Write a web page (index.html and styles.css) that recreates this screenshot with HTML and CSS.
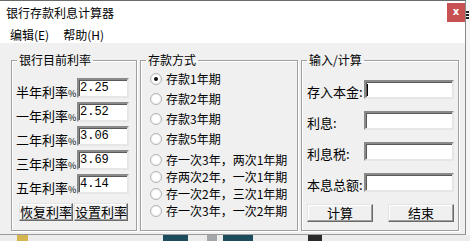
FILE: index.html
```html
<!DOCTYPE html>
<html lang="zh-CN">
<head>
    <meta charset="UTF-8">
    <title>银行存款利息计算器</title>
    <link rel="stylesheet" href="styles.css">
</head>
<body>
    <div class="desk">
        <div class="window">
            <div class="titlebar">
                <span class="title">银行存款利息计算器</span>
                <span class="close">x</span>
            </div>
            <div class="menubar">
                <span>编辑(E)</span>
                <span>帮助(H)</span>
            </div>

            <div class="client">
                <!-- 利率 -->
                <fieldset class="group rates">
                    <legend>银行目前利率</legend>
                    <div class="rates-body">
                        <div class="rate-row"><span class="label">半年利率<small>%</small></span><div class="field">2.25</div></div>
                        <div class="rate-row"><span class="label">一年利率<small>%</small></span><div class="field">2.52</div></div>
                        <div class="rate-row"><span class="label">二年利率<small>%</small></span><div class="field">3.06</div></div>
                        <div class="rate-row"><span class="label">三年利率<small>%</small></span><div class="field">3.69</div></div>
                        <div class="rate-row"><span class="label">五年利率<small>%</small></span><div class="field">4.14</div></div>
                        <div class="btn-row">
                            <button class="btn">恢复利率</button>
                            <button class="btn">设置利率</button>
                        </div>
                    </div>
                </fieldset>

                <!-- 存款方式 -->
                <fieldset class="group modes">
                    <legend>存款方式</legend>
                    <div class="modes-body">
                        <div class="radio-row"><span class="radio checked"></span>存款1年期</div>
                        <div class="radio-row"><span class="radio"></span>存款2年期</div>
                        <div class="radio-row"><span class="radio"></span>存款3年期</div>
                        <div class="radio-row"><span class="radio"></span>存款5年期</div>
                        <div class="radio-row tight first-tight"><span class="radio"></span>存一次3年，两次1年期</div>
                        <div class="radio-row tight"><span class="radio"></span>存两次2年，一次1年期</div>
                        <div class="radio-row tight"><span class="radio"></span>存一次2年，三次1年期</div>
                        <div class="radio-row tight"><span class="radio"></span>存一次3年，一次2年期</div>
                    </div>
                </fieldset>

                <!-- 输入/计算 -->
                <fieldset class="group calc">
                    <legend>输入/计算</legend>
                    <div class="calc-body">
                        <div class="calc-row"><span class="label">存入本金:</span><div class="field wide"><span class="caret"></span></div></div>
                        <div class="calc-row"><span class="label">利息:</span><div class="field wide"></div></div>
                        <div class="calc-row"><span class="label">利息税:</span><div class="field wide"></div></div>
                        <div class="calc-row"><span class="label">本息总额:</span><div class="field wide"></div></div>
                        <div class="calc-btns">
                            <button class="btn big">计算</button>
                            <button class="btn big">结束</button>
                        </div>
                    </div>
                </fieldset>
            </div>
        </div>
        <div class="side">
            <span class="mark"></span>
        </div>
    </div>
    <div class="below">
        <span class="blk yellow"></span>
        <span class="blk teal one"></span>
        <span class="blk grey"></span>
        <span class="blk teal two"></span>
        <span class="blk dark"></span>
    </div>
</body>
</html>
```

FILE: styles.css
```css
body {
    margin: 0;
    padding: 0;
    background: #ececec;
    font-family: "Noto Sans CJK SC", "Noto Sans", sans-serif;
    font-size: 12px;
    color: #000;
}

.desk {
    display: flex;
}

.window {
    box-sizing: border-box;
    width: 466px;
    height: 235px;
    border-top: 1px solid #6b6b6b;
    border-right: 1px solid #8a8a8a;
    border-bottom: 1px solid #9a9a9a;
    background: #f0f0f0;
    display: flex;
    flex-direction: column;
}

.titlebar {
    height: 21px;
    background: #fff;
    display: flex;
    justify-content: space-between;
}

.title {
    padding: 3px 0 0 6px;
    line-height: 18px;
}

.close {
    width: 18px;
    height: 19px;
    margin-top: 2px;
    background: #c75050;
    color: #fff;
    font: bold 10px "DejaVu Sans", sans-serif;
    line-height: 17px;
    text-align: center;
}

.menubar {
    height: 21px;
    box-sizing: border-box;
    background: #fff;
    display: flex;
    gap: 14px;
    padding: 4px 0 0 10px;
    line-height: 17px;
}

.client {
    flex: 1;
    display: flex;
    gap: 3px;
    padding: 10px 0 0 11px;
}

.group {
    box-sizing: border-box;
    height: 178px;
    margin: 0;
    padding: 0;
    min-width: 0;
    border: 1px solid #a0a0a0;
    box-shadow: inset 1px 1px #fff, 1px 1px #fff;
}

.group legend {
    margin-left: 5px;
    padding: 0 2px;
    font-size: 12px;
    line-height: 14px;
}

.rates { width: 126px; }
.modes { width: 158px; }
.calc  { width: 158px; }

.label {
    font-size: 13px;
    line-height: 16px;
    white-space: nowrap;
}

.label small {
    font-size: 9px;
}

.field {
    box-sizing: border-box;
    width: 52px;
    height: 20px;
    background: #fff;
    border: 2px solid;
    border-color: #8a8a8a #e6e6e6 #e6e6e6 #8a8a8a;
    box-shadow: inset 1px 1px #5a5a5a;
    padding: 1px 0 0 1px;
    font-family: "Liberation Mono", monospace;
    font-size: 12px;
    line-height: 14px;
}

.btn {
    box-sizing: border-box;
    height: 18px;
    padding: 0;
    background: #f0f0f0;
    border: 1px solid;
    border-color: #e3e3e3 #696969 #696969 #e3e3e3;
    box-shadow: inset -1px -1px #a0a0a0, inset 1px 1px #fff;
    font-family: "Noto Sans CJK SC", sans-serif;
    font-size: 13px;
    line-height: 14px;
    color: #000;
}

/* 利率 */
.rates-body {
    padding: 11px 7px 0 4px;
}

.rate-row {
    height: 20px;
    margin-bottom: 4px;
    display: flex;
    justify-content: space-between;
}

.rate-row .label {
    padding-top: 6px;
}

.btn-row {
    display: flex;
    gap: 1px;
    margin-top: 9px;
    padding-left: 3px;
}

.btn-row .btn {
    width: 54px;
}

/* 存款方式 */
.modes-body {
    padding: 2px 0 0 9px;
}

.radio-row {
    height: 20px;
    display: flex;
    align-items: center;
    white-space: nowrap;
    line-height: 14px;
}

.radio-row.tight {
    height: 17px;
}

.radio-row.first-tight {
    margin-top: 2px;
}

.radio {
    box-sizing: border-box;
    width: 12px;
    height: 12px;
    margin-right: 4px;
    border: 1px solid #b4b4b4;
    border-radius: 50%;
    background: radial-gradient(circle, #ffffff 45%, #e2e2e2 100%);
    display: flex;
    justify-content: center;
    align-items: center;
}

.radio.checked::after {
    content: "";
    width: 4px;
    height: 4px;
    border-radius: 50%;
    background: #111;
}

/* 输入/计算 */
.calc-body {
    padding: 13px 4px 0 5px;
}

.calc-row {
    height: 19px;
    margin-bottom: 12px;
    display: flex;
    justify-content: space-between;
}

.calc-row .label {
    padding-top: 4px;
}

.field.wide {
    width: 90px;
    height: 19px;
    padding: 2px 0 0 1px;
}

.caret {
    display: block;
    width: 1px;
    height: 12px;
    background: #000;
}

.calc-btns {
    display: flex;
    justify-content: space-between;
    margin-top: 3px;
}

.btn.big {
    width: 66px;
}

/* 背后的桌面 */
.side {
    flex: 1;
    background: #f6f6f6;
    padding-top: 11px;
}

.mark {
    display: block;
    width: 3px;
    height: 9px;
    background: repeating-linear-gradient(#222 0 2px, transparent 2px 3px);
}

.below {
    height: 6px;
    display: flex;
}

.blk {
    height: 6px;
}

.yellow { width: 11px; margin-left: 17px; background: #d7b54e; }
.teal { background: #1c4b5b; }
.teal.one { width: 25px; margin-left: 135px; }
.grey { width: 10px; margin-left: 19px; background: #a3a7a9; }
.teal.two { width: 30px; margin-left: 6px; }
.dark { width: 14px; margin-left: 55px; background: #2b2b2b; }
```
